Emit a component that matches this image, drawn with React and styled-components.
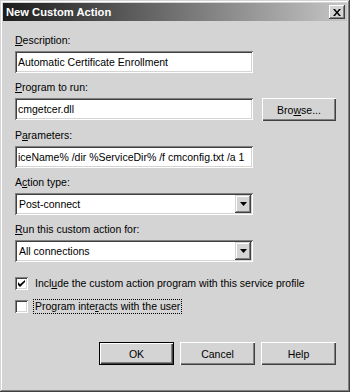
import React, { useState } from "react";
import styled, { createGlobalStyle } from "styled-components";

const GlobalStyle = createGlobalStyle`
  body {
    margin: 0;
    background: #d4d4d4;
    font-family: "Liberation Sans", Arial, sans-serif;
    font-size: 10.5px;
    color: #000;
  }
`;

const face = "#d4d4d4";

const Window = styled.div`
  box-sizing: border-box;
  width: 350px;
  height: 392px;
  padding: 3px;
  background: ${face};
  box-shadow: inset -1px -1px #404040, inset 1px 1px ${face},
    inset -2px -2px #808080, inset 2px 2px #ffffff;
  display: flex;
  flex-direction: column;
`;

const TitleBar = styled.div`
  height: 18px;
  display: flex;
  align-items: center;
  justify-content: space-between;
  padding: 0 2px 0 3px;
  background: linear-gradient(to right, #1c1c1c, #c6c6c6);
`;

const Title = styled.span`
  color: #fff;
  font-weight: bold;
  font-size: 11.2px;
`;

const CloseButton = styled.div`
  box-sizing: border-box;
  width: 16px;
  height: 14px;
  background: ${face};
  box-shadow: inset -1px -1px #404040, inset 1px 1px #ffffff,
    inset -2px -2px #808080;
  display: flex;
  align-items: center;
  justify-content: center;
`;

const Body = styled.div`
  flex: 1;
  display: flex;
  flex-direction: column;
  padding: 13px 11px 0 12px;
`;

const Field = styled.div`
  display: flex;
  flex-direction: column;
  margin-bottom: 8px;
`;

const Label = styled.div`
  height: 13px;
  line-height: 13px;
  margin-bottom: 4px;
`;

const Key = styled.span`
  text-decoration: underline;
  text-underline-offset: 1px;
`;

const Row = styled.div`
  display: flex;
  gap: 9px;
`;

const Sunken = styled.div`
  box-sizing: border-box;
  width: 238px;
  height: 22px;
  background: #fff;
  box-shadow: inset 1px 1px #808080, inset -1px -1px #ffffff,
    inset 2px 2px #404040, inset -2px -2px ${face};
  display: flex;
  align-items: center;
  padding: 0 2px 0 3px;
  white-space: nowrap;
  overflow: hidden;
`;

const Combo = styled(Sunken)`
  padding: 2px 2px 2px 4px;
  justify-content: space-between;
`;

const DropArrow = styled.div`
  box-sizing: border-box;
  width: 16px;
  height: 18px;
  background: ${face};
  box-shadow: inset -1px -1px #404040, inset 1px 1px ${face},
    inset -2px -2px #808080, inset 2px 2px #ffffff;
  display: flex;
  align-items: center;
  justify-content: center;
`;

const Button = styled.div`
  box-sizing: border-box;
  width: ${(p) => p.$w || 75}px;
  height: 23px;
  background: ${face};
  box-shadow: ${(p) =>
    p.$default
      ? `inset 1px 1px #000, inset -1px -1px #000, inset 2px 2px #fff, inset -2px -2px #404040, inset -3px -3px #808080`
      : `inset 1px 1px #fff, inset -1px -1px #404040, inset -2px -2px #808080`};
  display: flex;
  align-items: center;
  justify-content: center;
`;

const CheckRow = styled.label`
  display: flex;
  align-items: center;
  gap: 6px;
  height: 14px;
  margin-top: ${(p) => p.$top || 0}px;
`;

const Box = styled.div`
  box-sizing: border-box;
  width: 13px;
  height: 13px;
  background: #fff;
  box-shadow: inset 1px 1px #808080, inset -1px -1px #ffffff,
    inset 2px 2px #404040, inset -2px -2px ${face};
  display: flex;
  align-items: center;
  justify-content: center;
`;

const CheckText = styled.span`
  padding: 0 1px;
  outline: ${(p) => (p.$focus ? "1px dotted #000" : "none")};
  line-height: 13px;
`;

const Footer = styled.div`
  display: flex;
  justify-content: flex-end;
  gap: 6px;
  margin-top: 29px;
`;

function Arrow() {
  return (
    <svg width="7" height="4" viewBox="0 0 7 4">
      <path d="M0 0h7L3.5 4z" fill="#000" />
    </svg>
  );
}

function Check() {
  return (
    <svg width="7" height="7" viewBox="0 0 7 7">
      <path d="M0 2v3l2 2 5-5V-0L2 4.2z" fill="#000" />
    </svg>
  );
}

export default function App() {
  const [include, setInclude] = useState(true);
  const [interacts, setInteracts] = useState(false);

  return (
    <>
      <GlobalStyle />
      <Window>
        <TitleBar>
          <Title>New Custom Action</Title>
          <CloseButton>
            <svg width="8" height="7" viewBox="0 0 8 7">
              <path d="M0 0h2l2 2.5L6 0h2L5 3.5 8 7H6L4 4.5 2 7H0l3-3.5z" fill="#000" />
            </svg>
          </CloseButton>
        </TitleBar>
        <Body>
          <Field>
            <Label><Key>D</Key>escription:</Label>
            <Sunken>Automatic Certificate Enrollment</Sunken>
          </Field>
          <Field>
            <Label><Key>P</Key>rogram to run:</Label>
            <Row>
              <Sunken>cmgetcer.dll</Sunken>
              <Button $w={74}>Bro<Key>w</Key>se...</Button>
            </Row>
          </Field>
          <Field>
            <Label>P<Key>a</Key>rameters:</Label>
            <Sunken>iceName% /dir %ServiceDir% /f cmconfig.txt /a 1</Sunken>
          </Field>
          <Field>
            <Label>A<Key>c</Key>tion type:</Label>
            <Combo>
              Post-connect
              <DropArrow><Arrow /></DropArrow>
            </Combo>
          </Field>
          <Field>
            <Label><Key>R</Key>un this custom action for:</Label>
            <Combo>
              All connections
              <DropArrow><Arrow /></DropArrow>
            </Combo>
          </Field>
          <CheckRow $top={6} onClick={() => setInclude(!include)}>
            <Box>{include && <Check />}</Box>
            <CheckText>Incl<Key>u</Key>de the custom action program with this service profile</CheckText>
          </CheckRow>
          <CheckRow $top={9} onClick={() => setInteracts(!interacts)}>
            <Box>{interacts && <Check />}</Box>
            <CheckText $focus>Program inte<Key>r</Key>acts with the user</CheckText>
          </CheckRow>
          <Footer>
            <Button $default>OK</Button>
            <Button>Cancel</Button>
            <Button>Help</Button>
          </Footer>
        </Body>
      </Window>
    </>
  );
}
